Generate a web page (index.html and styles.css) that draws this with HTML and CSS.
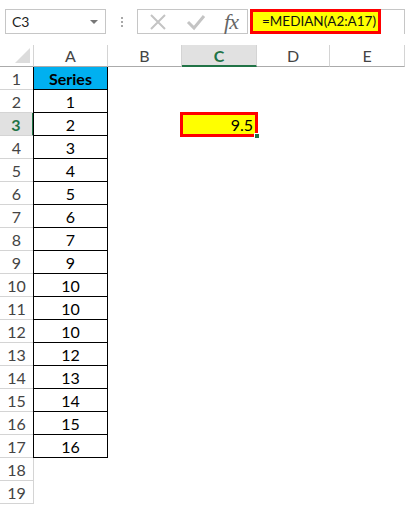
FILE: index.html
```html
<!DOCTYPE html>
<html lang="en">
<head>
  <meta charset="UTF-8" />
  <title>MEDIAN example</title>
  <link rel="stylesheet" href="styles.css">
</head>
<body>

<div class="toolbar">
  <div class="name-box">
    <span>C3</span>
    <span class="caret"></span>
  </div>
  <div class="grip">
    <span></span><span></span><span></span>
  </div>
  <div class="fx-buttons">
    <svg class="fx-icon" width="18" height="18" viewBox="0 0 18 18">
      <path d="M2 2 L16 16 M16 2 L2 16" stroke="#c4c4c4" stroke-width="2" fill="none" />
    </svg>
    <svg class="fx-icon" width="20" height="18" viewBox="0 0 20 18">
      <path d="M2 9 L8 15 L18 3" stroke="#c4c4c4" stroke-width="3" fill="none" />
    </svg>
    <span class="fx-label">fx</span>
  </div>
  <div class="formula-field">
    <div class="formula">=MEDIAN(A2:A17)</div>
  </div>
</div>

<div class="sheet" id="sheet">
  <div class="corner"><span class="tri"></span></div>
  <div class="col-head">A</div>
  <div class="col-head">B</div>
  <div class="col-head active">C</div>
  <div class="col-head">D</div>
  <div class="col-head">E</div>
</div>

<script>
  const sheet = document.getElementById("sheet");
  const series = [1, 2, 3, 4, 5, 6, 7, 9, 10, 10, 10, 12, 13, 14, 15, 16];

  for (let r = 1; r <= 19; r++) {
    const head = document.createElement("div");
    head.className = "row-head" + (r === 3 ? " active" : "");
    head.textContent = r;
    sheet.appendChild(head);

    for (let c = 0; c < 5; c++) {
      const cell = document.createElement("div");
      cell.className = "cell";
      if (c === 0 && r <= 17) {
        cell.classList.add("boxed");
        if (r === 1) {
          cell.classList.add("title");
          cell.textContent = "Series";
        } else {
          cell.textContent = series[r - 2];
        }
      }
      if (c === 2 && r === 3) {
        cell.classList.add("result");
        cell.innerHTML = '9.5<span class="handle"></span>';
      }
      sheet.appendChild(cell);
    }
  }
</script>
</body>
</html>
```

FILE: styles.css
```css
body {
  margin: 0;
  padding: 0;
  background: white;
  font-family: Lato, "Liberation Sans", sans-serif;
  color: #000;
  width: 405px;
  overflow: hidden;
}

.toolbar {
  height: 45px;
  display: flex;
  align-items: flex-start;
  padding-top: 9px;
  padding-left: 5px;
  box-sizing: border-box;
}

.name-box {
  width: 101px;
  height: 25px;
  box-sizing: border-box;
  border: 1px solid #c6c6c6;
  display: flex;
  align-items: center;
  justify-content: space-between;
  padding: 0 7px 0 6px;
  font-size: 14px;
  color: #222;
}

.caret {
  width: 0;
  height: 0;
  border-left: 4px solid transparent;
  border-right: 4px solid transparent;
  border-top: 4px solid #777;
}

.grip {
  width: 31px;
  height: 25px;
  display: flex;
  flex-direction: column;
  align-items: center;
  justify-content: center;
  gap: 2px;
}

.grip span {
  width: 2px;
  height: 2px;
  background: #a8a8a8;
}

.fx-buttons {
  width: 111px;
  height: 25px;
  box-sizing: border-box;
  border: 1px solid #c6c6c6;
  display: flex;
  align-items: center;
  justify-content: space-between;
  padding: 0 9px 0 11px;
}

.fx-label {
  font-family: "Liberation Serif", serif;
  font-style: italic;
  font-size: 22px;
  line-height: 22px;
  color: #666;
  letter-spacing: -1px;
}

.formula-field {
  flex: 1;
  height: 25px;
  margin-left: 2px;
  box-sizing: border-box;
  border-top: 1px solid #c6c6c6;
  border-right: 1px solid #c6c6c6;
  display: flex;
}

.formula {
  width: 131px;
  height: 25px;
  margin-top: -1px;
  box-sizing: border-box;
  border: 3px solid #ff0000;
  background: #ffff00;
  font-size: 13.5px;
  line-height: 19px;
  padding-left: 9px;
  color: #111;
}

.sheet {
  display: grid;
  grid-template-columns: 34px 74px 74px 75px 73px 75px;
  grid-template-rows: 22px repeat(19, 23px);
}

.corner {
  position: relative;
  border-right: 1px solid #d4d4d4;
  border-bottom: 1px solid #ababab;
}

.tri {
  position: absolute;
  right: 3px;
  bottom: 3px;
  width: 0;
  height: 0;
  border-left: 15px solid transparent;
  border-bottom: 15px solid #dcdcdc;
}

.col-head {
  border-right: 1px solid #d4d4d4;
  border-bottom: 1px solid #ababab;
  display: flex;
  align-items: center;
  justify-content: center;
  font-size: 16px;
  color: #444;
}

.col-head.active {
  background: #e1e1e1;
  border-bottom: 2px solid #217346;
  color: #217346;
  font-weight: bold;
}

.row-head {
  border-right: 1px solid #d4d4d4;
  border-bottom: 1px solid #d4d4d4;
  display: flex;
  align-items: center;
  justify-content: center;
  font-size: 16px;
  color: #444;
}

.row-head.active {
  background: #e1e1e1;
  border-right: 2px solid #217346;
  color: #217346;
  font-weight: bold;
}

.cell {
  display: flex;
  align-items: center;
  justify-content: center;
  font-size: 16px;
  position: relative;
}

.cell.boxed {
  border-left: 1px solid #000;
  border-right: 1px solid #000;
  border-bottom: 1px solid #000;
  margin-left: -1px;
}

.cell.title {
  background: #00b0f0;
  font-weight: bold;
  font-size: 16px;
}

.cell.result {
  justify-content: flex-end;
  background: #ffff00;
  border: 3px solid #ff0000;
  margin: -1px -1px -1px -2px;
  padding-right: 2px;
}

.handle {
  position: absolute;
  right: -5px;
  bottom: -5px;
  width: 4px;
  height: 4px;
  background: #217346;
  border: 1px solid white;
}
```
